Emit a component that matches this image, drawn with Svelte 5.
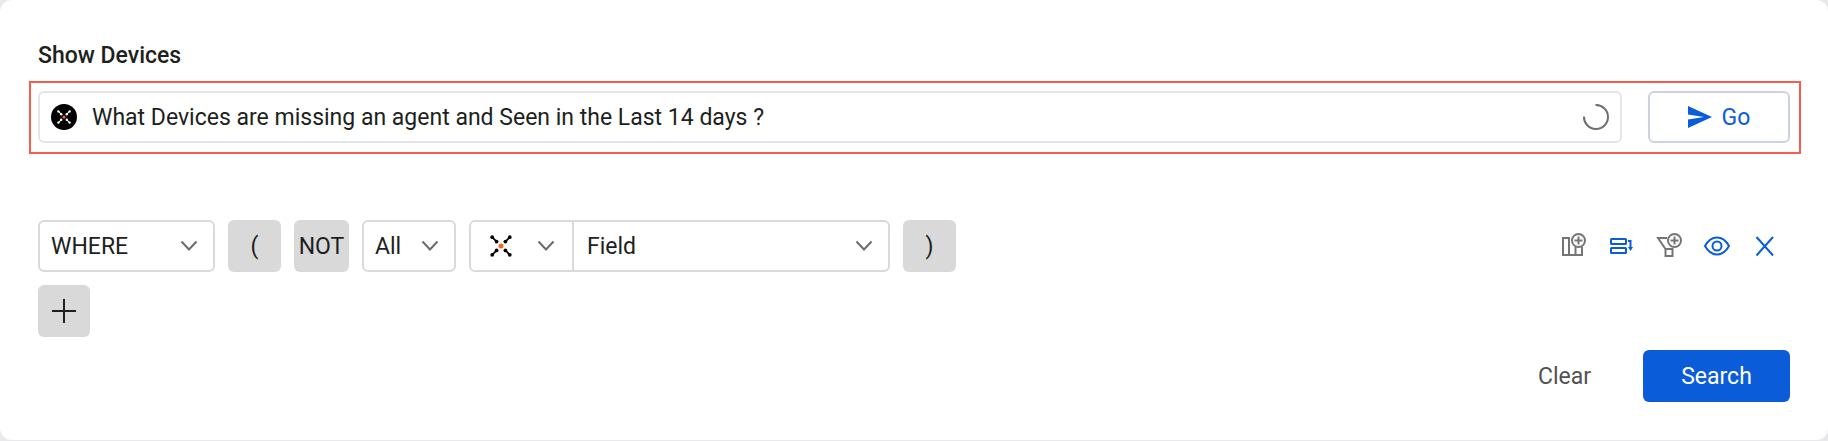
<script>
  let query = $state('What Devices are missing an agent and Seen in the Last 14 days ?');
  let clause = $state('WHERE');
  let scope = $state('All');
  let field = $state('Field');
</script>

{#snippet chevron()}
  <svg class="chevron" width="18" height="12" viewBox="0 0 18 12" aria-hidden="true">
    <path d="M1.5 1.5 9 9.5l7.5-8" />
  </svg>
{/snippet}

{#snippet mark(ink)}
  <g stroke={ink} fill={ink} stroke-width="1.5">
    <path d="M2 2 6 6M18 2l-4 4M2 18l4-4M18 18l-4-4" />
    {#each [[2, 2], [18, 2], [2, 18], [18, 18], [6, 6], [14, 6], [6, 14], [14, 14]] as [cx, cy]}
      <circle {cx} {cy} r="1.7" stroke="none" />
    {/each}
  </g>
  <circle cx="10" cy="10" r="2.3" fill="#ff6122" />
{/snippet}

<main class="card">
  <label class="title" for="query">Show Devices</label>

  <form class="ask" onsubmit={(e) => e.preventDefault()}>
    <div class="ask-box">
      <svg width="26" height="26" viewBox="0 0 26 26" aria-hidden="true">
        <circle cx="13" cy="13" r="13" fill="#000" />
        <g transform="translate(6 6) scale(.7)">{@render mark('#fff')}</g>
      </svg>
      <input id="query" type="text" bind:value={query} />
      <svg class="spinner" width="26" height="26" viewBox="0 0 26 26" aria-hidden="true">
        <path d="M12.5 1A12 12 0 1 1 1 12.5" />
      </svg>
    </div>
    <button class="btn go" type="submit">
      <svg width="24" height="22" viewBox="0 0 24 22" aria-hidden="true">
        <path d="M0 0 24 11 0 22V13.5L16 11 0 8.5Z" />
      </svg>
      <span>Go</span>
    </button>
  </form>

  <div class="rule">
    <div class="drop clause">
      <select aria-label="Clause" bind:value={clause}><option>WHERE</option></select>
      {@render chevron()}
    </div>
    <button class="btn key" type="button"><span>(</span></button>
    <button class="btn key not" type="button"><span>NOT</span></button>
    <div class="drop scope">
      <select aria-label="Scope" bind:value={scope}><option>All</option></select>
      {@render chevron()}
    </div>
    <div class="pair">
      <button class="source" type="button" aria-label="Source" aria-haspopup="listbox">
        <svg width="22" height="22" viewBox="0 0 20 20" aria-hidden="true">{@render mark('#000')}</svg>
        {@render chevron()}
      </button>
      <div class="drop field">
        <select aria-label="Field" bind:value={field}><option>Field</option></select>
        {@render chevron()}
      </div>
    </div>
    <button class="btn key" type="button"><span>)</span></button>

    <div class="tools">
      <button type="button" aria-label="Add column">
        <svg width="26" height="26" viewBox="0 0 26 26">
          <path d="M10 5H3v17h19v-8M9 5v17M15.5 14v8" />
          <circle cx="18.5" cy="7.5" r="6.5" />
          <path d="M18.5 3.5v8M14.5 7.5h8" />
        </svg>
      </button>
      <button class="on" type="button" aria-label="Insert row">
        <svg width="26" height="26" viewBox="0 0 26 26">
          <rect x="3" y="6" width="15" height="5" rx="0.5" />
          <rect x="3" y="15" width="15" height="5" rx="0.5" />
          <path d="M20 8h2.5v7" />
          <path class="solid" d="M20 14h5l-2.5 4z" />
        </svg>
      </button>
      <button type="button" aria-label="Add filter">
        <svg width="26" height="26" viewBox="0 0 26 26">
          <path d="M11 5H2l7.5 11v7h7v-7h-7M16.5 18v-3" />
          <circle cx="18.5" cy="7.5" r="6.5" />
          <path d="M18.5 3.5v8M14.5 7.5h8" />
        </svg>
      </button>
      <button class="on" type="button" aria-label="Preview">
        <svg width="26" height="26" viewBox="0 0 26 26">
          <path d="M1 13C4 7.5 8 4.500 13 4.500S22 7.500 25 13C22 18.500 18 21.500 13 21.500S4 18.500 1 13Z" />
          <circle cx="13" cy="13" r="4.500" />
        </svg>
      </button>
      <button class="on" type="button" aria-label="Remove">
        <svg width="26" height="26" viewBox="0 0 26 26">
          <path d="M4.500 4 21 22.500M21 4 4.500 22.500" />
        </svg>
      </button>
    </div>
  </div>

  <button class="btn key add" type="button" aria-label="Add rule">
    <svg width="24" height="24" viewBox="0 0 24 24" aria-hidden="true">
      <path d="M12 0v24M0 12h24" />
    </svg>
  </button>

  <footer>
    <button class="btn clear" type="button"><span>Clear</span></button>
    <button class="btn search" type="button"><span>Search</span></button>
  </footer>
</main>

<style>
  :global(body) {
    background: #e9e9eb;
  }
  .card,
  .card * {
    box-sizing: border-box;
  }
  .card {
    padding: 42px 38px 38px;
    margin-bottom: 1px;
    border-radius: 12px;
    background: #fff;
    color: #1d1f20;
    font: 400 23px/28px Roboto, sans-serif;
  }
  svg {
    display: block;
    flex: none;
    fill: none;
  }
  button,
  input,
  select {
    font: inherit;
    color: inherit;
    margin: 0;
    padding: 0;
    border: 0;
    background: none;
  }
  .title {
    display: block;
    font-weight: 500;
  }
  .ask {
    display: flex;
    gap: 26px;
    margin: 11px -11px 66px -9px;
    padding: 8px 9px 9px 7px;
    border: 2px solid #fa5b4b;
  }
  .ask-box {
    flex: 1;
    display: flex;
    align-items: center;
    gap: 15px;
    height: 52px;
    padding: 0 11px;
    border: 2px solid #e1e5ec;
    border-radius: 6px;
  }
  .ask-box input {
    flex: 1;
    min-width: 0;
    height: 100%;
    outline: 0;
  }
  .spinner {
    stroke: #707070;
    stroke-width: 2;
  }
  .btn {
    display: flex;
    align-items: center;
    justify-content: center;
    gap: 10px;
    height: 52px;
    border-radius: 6px;
  }
  .btn span {
    padding-top: 2px;
  }
  .go {
    width: 142px;
    border: 2px solid #ccd2e2;
    color: #0b5cd8;
  }
  .go svg {
    fill: #0b5cd8;
  }
  .rule {
    display: flex;
    flex-wrap: wrap;
    gap: 13px;
    margin-bottom: 13px;
  }
  .drop {
    display: grid;
    align-items: center;
    height: 52px;
    border: 2px solid #dadada;
    border-radius: 6px;
  }
  .drop > :global(*) {
    grid-area: 1 / 1;
  }
  .drop select {
    appearance: none;
    width: 100%;
    height: 100%;
    padding: 2px 0 0 11px;
  }
  .chevron {
    stroke: #6c6c6c;
    stroke-width: 2;
    pointer-events: none;
  }
  .drop .chevron {
    justify-self: end;
    margin-right: 15px;
  }
  .clause {
    width: 177px;
  }
  .scope {
    width: 94px;
  }
  .key {
    width: 53px;
    background: #d9d9d9;
  }
  .not {
    width: 55px;
  }
  .add {
    width: 52px;
  }
  .pair {
    display: flex;
    width: 421px;
    height: 52px;
    border: 2px solid #dadada;
    border-radius: 6px;
  }
  .source {
    display: flex;
    align-items: center;
    gap: 25px;
    padding: 0 17px 0 19px;
  }
  .pair .field {
    flex: 1;
    height: 100%;
    border: 0;
    border-left: 2px solid #dadada;
    border-radius: 0;
  }
  .pair .field select {
    padding-left: 13px;
  }
  .tools {
    display: flex;
    align-items: center;
    gap: 22px;
    margin-left: auto;
    padding-right: 12px;
  }
  .tools svg {
    stroke: #757575;
    stroke-width: 2;
  }
  .tools .on svg {
    stroke: #0b5cd8;
  }
  .tools .solid {
    fill: #0b5cd8;
    stroke: none;
  }
  .add svg {
    stroke: #1d1f20;
    stroke-width: 2;
  }
  footer {
    display: flex;
    justify-content: flex-end;
    gap: 26px;
    margin-top: 13px;
  }
  .clear {
    padding: 0 26px;
    color: #515151;
  }
  .search {
    width: 147px;
    background: #0b5cd8;
    color: #fff;
  }
</style>
